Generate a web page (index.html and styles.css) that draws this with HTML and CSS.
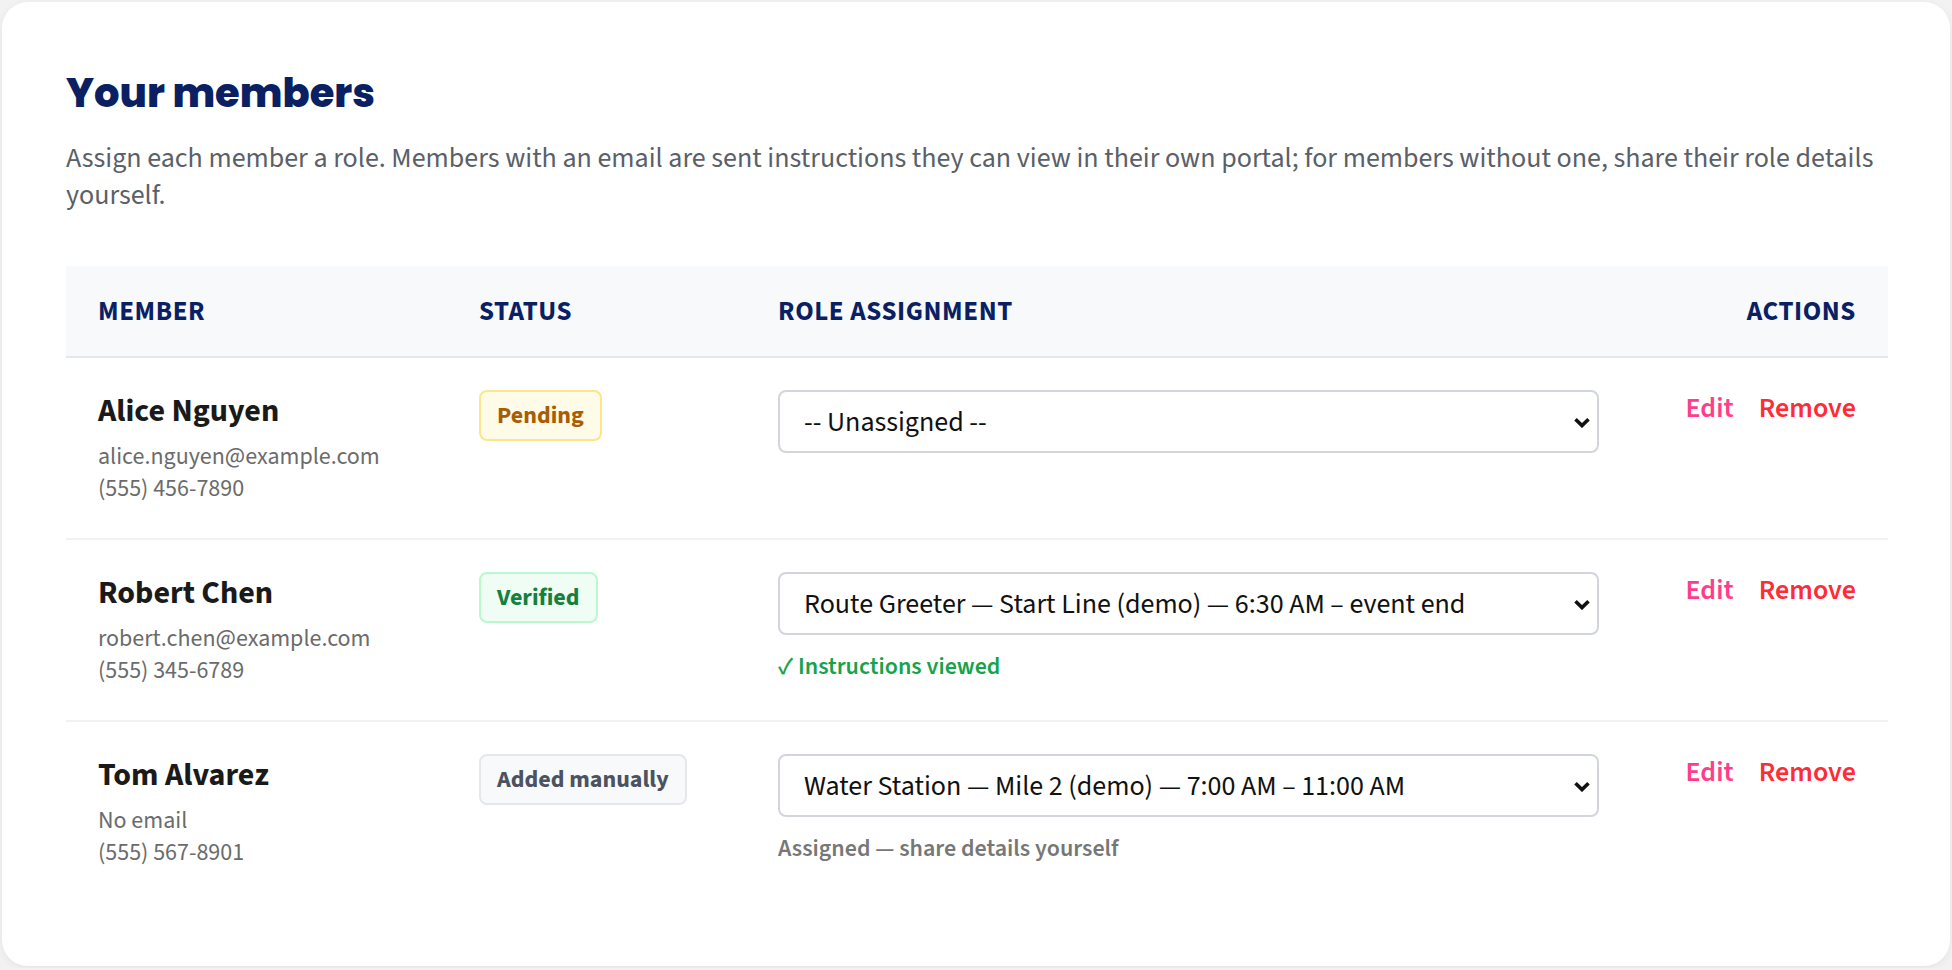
FILE: index.html
```html
<!DOCTYPE html>
<html lang="en">
<head>
  <meta charset="UTF-8">
  <meta name="viewport" content="width=device-width, initial-scale=1.0">
  <title>Your members</title>
  <link rel="stylesheet" href="styles.css">
</head>
<body>
  <section class="members-card">
    <h2 class="members-title">Your members</h2>
    <p class="members-intro">Assign each member a role. Members with an email are sent instructions they can view in their own portal; for members without one, share their role details yourself.</p>

    <table class="members-table">
      <colgroup>
        <col class="col-member">
        <col class="col-status">
        <col class="col-role">
        <col class="col-actions">
      </colgroup>
      <thead>
        <tr>
          <th>Member</th>
          <th>Status</th>
          <th>Role assignment</th>
          <th class="th-actions">Actions</th>
        </tr>
      </thead>
      <tbody>
        <tr>
          <td>
            <div class="member-name">Alice Nguyen</div>
            <div class="member-meta">alice.nguyen@example.com</div>
            <div class="member-meta">(555) 456-7890</div>
          </td>
          <td><span class="badge badge-pending">Pending</span></td>
          <td>
            <div class="select-wrap">
              <select class="role-select">
                <option selected>-- Unassigned --</option>
                <option>Route Greeter — Start Line (demo) — 6:30 AM – event end</option>
                <option>Water Station — Mile 2 (demo) — 7:00 AM – 11:00 AM</option>
              </select>
              <svg class="select-chevron" viewBox="0 0 18 11" aria-hidden="true"><path d="M2.5 2.2 L9 8.6 L15.5 2.2"/></svg>
            </div>
          </td>
          <td class="cell-actions">
            <a href="#" class="link-edit">Edit</a>
            <a href="#" class="link-remove">Remove</a>
          </td>
        </tr>
        <tr>
          <td>
            <div class="member-name">Robert Chen</div>
            <div class="member-meta">robert.chen@example.com</div>
            <div class="member-meta">(555) 345-6789</div>
          </td>
          <td><span class="badge badge-verified">Verified</span></td>
          <td>
            <div class="select-wrap">
              <select class="role-select">
                <option>-- Unassigned --</option>
                <option selected>Route Greeter — Start Line (demo) — 6:30 AM – event end</option>
                <option>Water Station — Mile 2 (demo) — 7:00 AM – 11:00 AM</option>
              </select>
              <svg class="select-chevron" viewBox="0 0 18 11" aria-hidden="true"><path d="M2.5 2.2 L9 8.6 L15.5 2.2"/></svg>
            </div>
            <div class="role-note note-viewed">✓ Instructions viewed</div>
          </td>
          <td class="cell-actions">
            <a href="#" class="link-edit">Edit</a>
            <a href="#" class="link-remove">Remove</a>
          </td>
        </tr>
        <tr>
          <td>
            <div class="member-name">Tom Alvarez</div>
            <div class="member-meta">No email</div>
            <div class="member-meta">(555) 567-8901</div>
          </td>
          <td><span class="badge badge-manual">Added manually</span></td>
          <td>
            <div class="select-wrap">
              <select class="role-select">
                <option>-- Unassigned --</option>
                <option>Route Greeter — Start Line (demo) — 6:30 AM – event end</option>
                <option selected>Water Station — Mile 2 (demo) — 7:00 AM – 11:00 AM</option>
              </select>
              <svg class="select-chevron" viewBox="0 0 18 11" aria-hidden="true"><path d="M2.5 2.2 L9 8.6 L15.5 2.2"/></svg>
            </div>
            <div class="role-note note-shared">Assigned — share details yourself</div>
          </td>
          <td class="cell-actions">
            <a href="#" class="link-edit">Edit</a>
            <a href="#" class="link-remove">Remove</a>
          </td>
        </tr>
      </tbody>
    </table>
  </section>
</body>
</html>
```

FILE: styles.css
```css
body {
  margin: 0;
  padding: 2px;
  background: #f2f2f3;
  font-family: "Source Sans 3", "Source Sans Pro", Lato, sans-serif;
  color: #1b1b1b;
}

.members-card {
  background: #ffffff;
  border-radius: 26px;
  padding: 64px 62px 64px 64px;
  box-shadow: 0 2px 8px rgba(0, 0, 0, 0.06);
}

.members-title {
  margin: 0 0 20px;
  font-family: Poppins, Inter, sans-serif;
  font-weight: 800;
  font-size: 40px;
  line-height: 54px;
  color: #0b1f63;
}

.members-intro {
  margin: 0 0 52px;
  font-size: 28px;
  line-height: 37px;
  color: #5a5f68;
}

.members-table {
  width: 100%;
  border-collapse: collapse;
  table-layout: fixed;
}

.col-member { width: 381px; }
.col-status { width: 299px; }
.col-actions { width: 257px; }

.members-table th {
  background: #f8f9fb;
  border-bottom: 2px solid #e5e7eb;
  padding: 0 32px;
  height: 90px;
  text-align: left;
  font-size: 27px;
  font-weight: 700;
  letter-spacing: 0.6px;
  text-transform: uppercase;
  color: #0b1f63;
}

.members-table th.th-actions {
  text-align: right;
}

.members-table td {
  vertical-align: top;
  padding: 32px 32px 33px;
  border-bottom: 2px solid #f1f2f4;
}

.members-table tbody tr:last-child td {
  border-bottom: none;
}

.member-name {
  font-size: 32px;
  font-weight: 700;
  line-height: 42px;
  color: #1a1a1a;
  margin-bottom: 9px;
}

.member-meta {
  font-size: 24px;
  line-height: 32px;
  color: #6b6b6b;
}

.badge {
  display: inline-block;
  padding: 9px 16px;
  border: 2px solid;
  border-radius: 8px;
  font-size: 24px;
  font-weight: 700;
  line-height: 29px;
}

.badge-pending {
  background: #fefbe8;
  border-color: #fde68a;
  color: #a85d05;
}

.badge-verified {
  background: #effdf4;
  border-color: #bbf7d0;
  color: #14803c;
}

.badge-manual {
  background: #f8f9fb;
  border-color: #e5e7eb;
  color: #4b5260;
}

.select-wrap {
  position: relative;
}

.role-select {
  display: block;
  width: 100%;
  height: 63px;
  padding: 0 48px 0 24px;
  border: 2px solid #d2d5db;
  border-radius: 8px;
  background: #ffffff;
  font-family: inherit;
  font-size: 28px;
  color: #111111;
  -webkit-appearance: none;
  appearance: none;
}

.select-chevron {
  position: absolute;
  right: 8px;
  top: 50%;
  width: 18px;
  height: 11px;
  margin-top: -5px;
  pointer-events: none;
  fill: none;
  stroke: #111111;
  stroke-width: 3.6;
}

.role-note {
  margin-top: 17px;
  font-size: 24px;
  font-weight: 600;
  line-height: 30px;
}

.note-viewed {
  color: #16a34a;
}

.note-shared {
  color: #777777;
}

.cell-actions {
  text-align: right;
  white-space: nowrap;
  line-height: 36px;
}

.cell-actions a {
  font-size: 28px;
  font-weight: 600;
  text-decoration: none;
}

.link-edit {
  color: #ff3d8b;
  margin-right: 22px;
}

.link-remove {
  color: #ff2b36;
}
```
